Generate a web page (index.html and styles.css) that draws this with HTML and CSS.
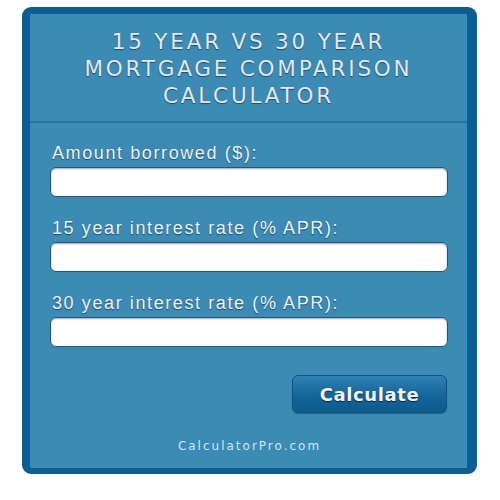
FILE: index.html
```html
<!DOCTYPE html>
<html>
<head>
<meta charset="utf-8">
<link rel="stylesheet" href="styles.css">
</head>
<body>
<div class="page">
  <div class="box">
    <div class="header">
      <h1 class="title">15 YEAR VS 30 YEAR<br>MORTGAGE COMPARISON<br>CALCULATOR</h1>
    </div>
    <div class="form">
      <label class="label">Amount borrowed ($):</label>
      <input class="field" type="text">
      <label class="label">15 year interest rate (% APR):</label>
      <input class="field" type="text">
      <label class="label">30 year interest rate (% APR):</label>
      <input class="field" type="text">
      <div class="actions">
        <button class="btn" type="button">Calculate</button>
      </div>
      <div class="footer">CalculatorPro.com</div>
    </div>
  </div>
</div>
</body>
</html>
```

FILE: styles.css
```css
html, body {
  margin: 0;
  padding: 0;
  background: #ffffff;
}
.page {
  padding: 7px 23px 26px 22px;
}
.box {
  border-style: solid;
  border-color: #0b5e93;
  border-width: 7px 10px 6px 8px;
  border-radius: 9px;
  background: #3b8bb4;
  box-sizing: border-box;
  height: 467px;
  display: flex;
  flex-direction: column;
}
.header {
  height: 107px;
  border-bottom: 2px solid #2673a0;
  display: flex;
  align-items: center;
  justify-content: center;
}
.title {
  margin: 0;
  padding-top: 2px;
  font-family: "DejaVu Sans", sans-serif;
  font-weight: normal;
  font-size: 21.5px;
  line-height: 27px;
  letter-spacing: 2.8px;
  text-align: center;
  color: #e6e6e6;
  text-shadow: 0 1px 1px rgba(0, 40, 70, 0.6);
}
.form {
  padding: 20px 20px 0 22px;
  display: flex;
  flex-direction: column;
}
.label {
  font-family: "Liberation Sans", Arial, sans-serif;
  font-size: 18px;
  letter-spacing: 1.6px;
  color: #f0f0f0;
  text-shadow: 0 1px 1px rgba(0, 40, 70, 0.6);
  line-height: 20px;
  height: 24px;
}
.field {
  display: block;
  width: 398px;
  height: 30px;
  box-sizing: border-box;
  margin: 0 0 21px -2px;
  border: 1px solid #21577a;
  border-radius: 6px;
  background: #ffffff;
  box-shadow: inset 0 1px 2px rgba(0, 0, 0, 0.35);
}
.actions {
  display: flex;
  justify-content: flex-end;
  margin-top: 7px;
}
.btn {
  width: 155px;
  height: 38px;
  border: 1px solid #0d5483;
  border-radius: 6px;
  background: linear-gradient(#2f82b3, #14659a 55%, #0e5a8c);
  box-shadow: 0 1px 1px rgba(0, 30, 60, 0.4);
  font-family: "DejaVu Sans", sans-serif;
  font-weight: bold;
  font-size: 18px;
  letter-spacing: 0.6px;
  color: #f2f2f2;
  text-shadow: 0 1px 1px rgba(0, 0, 0, 0.6);
}
.footer {
  margin-top: 26px;
  text-align: center;
  font-family: "DejaVu Sans", sans-serif;
  font-size: 12px;
  letter-spacing: 2px;
  color: #cfe6f4;
}
```
